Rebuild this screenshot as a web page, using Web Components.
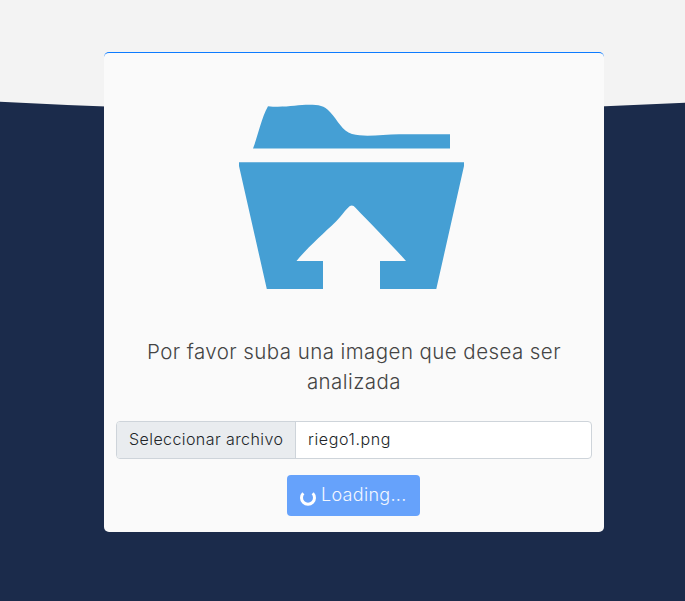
<!DOCTYPE html>
<html lang="es">
<head>
<meta charset="utf-8">
<title>Subir imagen</title>
<style>
html,body{margin:0;height:100%;overflow:hidden}
body{font-family:Inter,"Open Sans","Liberation Sans",sans-serif;font-weight:300;background:#1b2b4b}
.last{letter-spacing:.45px}
</style>
</head>
<body>
<upload-page>
  <upload-card>
    <folder-icon slot="icon"></folder-icon>
    <span slot="title">Por favor suba una imagen que desea ser<br><span class="last">analizada</span></span>
    <file-field><span slot="label">Seleccionar archivo</span><span slot="name">riego1.png</span></file-field>
    <loading-button>Loading...</loading-button>
  </upload-card>
</upload-page>
<script>
function define(name, markup) {
  customElements.define(name, class extends HTMLElement {
    constructor() {
      super();
      this.attachShadow({mode: "open"}).innerHTML = markup;
    }
  });
}

define("upload-page", `
<style>
:host{display:grid;grid-template:100% / 100%;width:100%;height:100%;background:#1b2b4b;overflow:hidden}
.top{grid-area:1/1;display:block;width:100%;height:130px}
.content{grid-area:1/1;display:flex;justify-content:center;align-items:flex-start;padding:52px 0 0 23px}
</style>
<svg class="top" viewBox="0 0 685 130" preserveAspectRatio="none"><path d="M0 0H685V102.7Q342.5 120 0 101.7Z" fill="#f3f3f3"/></svg>
<div class="content"><slot></slot></div>`);

define("upload-card", `
<style>
:host{display:flex;flex-direction:column;box-sizing:border-box;width:500px;height:480px;padding:52px 12px 0;border-top:1px solid #0d7bff;border-radius:5px;background:#fafafa;align-items:center}
.title{margin:46px 0 24px;font-size:20.5px;line-height:30px;color:#444;text-align:center;white-space:nowrap;letter-spacing:.43px}
</style>
<slot name="icon"></slot>
<div class="title"><slot name="title"></slot></div>
<slot></slot>`);

define("folder-icon", `
<style>:host{display:block;width:226px;height:186px;margin-right:4px}svg{display:block;overflow:visible}</style>
<svg width="226" height="186" viewBox="239 105 226 186" fill="#459fd4">
<path d="M253 148.5C258.500 134 261 119 268 106.200C283 108 298 104.800 309 104.800C319 104.800 324 105.500 330 112C338 120.500 342 131 352 134C366 137.700 383 134.200 399 134.200H450V148.500Z"/>
<path d="M239 162.200H464V166L436.300 289H380V261H406C391 244 371 224 355.500 207.700Q351.800 203.500 348 207.700C344 211.500 341 216.500 336 221.500C323 234 307 248 296.500 261H323V289H266.800L239 166Z"/>
</svg>`);

define("file-field", `
<style>
:host{display:flex;box-sizing:border-box;width:476px;height:38px;border:1px solid #ced4da;border-radius:4px;background:#fff;overflow:hidden;font-size:16px;line-height:34px;color:#212529;white-space:nowrap}
.label{box-sizing:border-box;width:179px;padding-left:12px;background:#e9ecef;border-right:1px solid #ced4da;letter-spacing:.42px}
.name{padding-left:12px;letter-spacing:.6px}
</style>
<div class="label"><slot name="label"></slot></div><div class="name"><slot name="name"></slot></div>`);

define("loading-button", `
<style>
:host{display:flex;box-sizing:border-box;width:133px;height:41px;margin:16px 1px 0 0;padding-left:12px;border-radius:4px;background:#66a2fb;color:#f3f7ff;font-size:18px;line-height:40px;letter-spacing:.3px;white-space:nowrap}
svg{width:18px;height:18px;margin:14px 4px 0 0;flex:none}
</style>
<svg viewBox="0 0 18 18" fill="none" stroke="#fff" stroke-width="3"><path d="M4.300 4.300A6.500 6.500 0 1 0 13.700 4.300"/></svg><span><slot></slot></span>`);
</script>
</body>
</html>
